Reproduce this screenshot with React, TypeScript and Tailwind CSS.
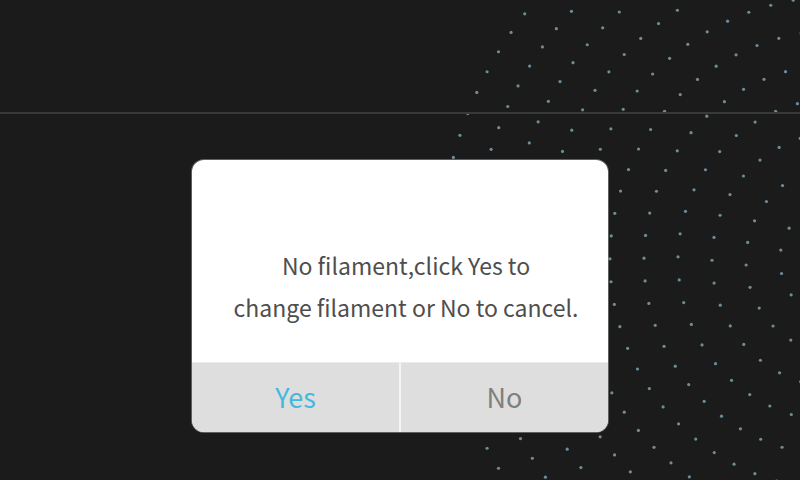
import React from "react";

function Dots() {
  const cx = 840;
  const cy = 260;
  const pts: { x: number; y: number }[] = [];
  for (let k = 0; k < 14; k++) {
    const r = 400 - 34 * k;
    if (r < 15) break;
    const n = Math.max(4, Math.round((2 * Math.PI * r) / 23));
    const phase = k * 0.37;
    for (let i = 0; i < n; i++) {
      const a = phase + (i * 2 * Math.PI) / n;
      const x = cx + r * Math.cos(a);
      const y = cy + r * Math.sin(a);
      if (x > -4 && x < 804 && y > -4 && y < 484) pts.push({ x, y });
    }
  }
  return (
    <svg className="absolute inset-0" width={800} height={480} viewBox="0 0 800 480">
      {pts.map((p, i) => (
        <circle key={i} cx={p.x} cy={p.y} r={1.6} fill="#6f8c9a" />
      ))}
    </svg>
  );
}

export default function App() {
  const font = { fontFamily: '"Noto Sans CJK SC", "Noto Sans", sans-serif' };
  return (
    <div className="relative w-[800px] h-[480px] overflow-hidden bg-[#1b1b1b]" style={font}>
      <Dots />
      <div className="relative flex flex-col">
        <div className="h-[114px] border-b-2 border-[#393939]" />
        <div className="flex justify-center pt-[46px]">
          <div className="w-[416px] h-[272px] rounded-[12px] overflow-hidden bg-white flex flex-col ring-1 ring-white/30">
            <div className="h-[202px] flex flex-col items-center pt-[84px] pl-[12px] text-[23px] leading-[42px] text-[#4e4e4e]">
              <div>No filament,click Yes to</div>
              <div>change filament or No to cancel.</div>
            </div>
            <div className="flex-1 flex bg-[#dedede] border-t border-[#ececec]">
              <div className="flex-1 flex items-center justify-center text-[27px] text-[#46b8dc]">Yes</div>
              <div className="w-[2px] bg-[#f4f4f4]" />
              <div className="flex-1 flex items-center justify-center text-[27px] text-[#7f7f7f]">No</div>
            </div>
          </div>
        </div>
      </div>
    </div>
  );
}
